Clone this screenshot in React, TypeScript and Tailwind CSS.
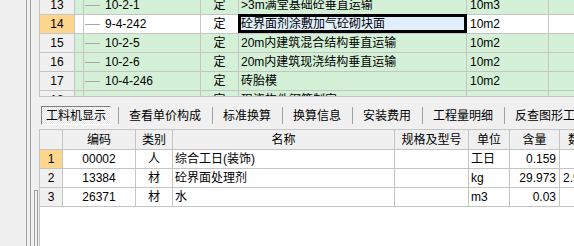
import React from "react";

const FONT = "font-['Liberation_Sans','Noto_Sans_CJK_SC',sans-serif]";

type TopRow = { no: string; code: string; kind: string; name: string; unit: string; selected?: boolean; box?: boolean };

const topRows: TopRow[] = [
  { no: "13", code: "10-2-1", kind: "定", name: ">3m满堂基础砼垂直运输", unit: "10m3" },
  { no: "14", code: "9-4-242", kind: "定", name: "砼界面剂涂敷加气砼砌块面", unit: "10m2", selected: true },
  { no: "15", code: "10-2-5", kind: "定", name: "20m内建筑混合结构垂直运输", unit: "10m2" },
  { no: "16", code: "10-2-6", kind: "定", name: "20m内建筑现浇结构垂直运输", unit: "10m2" },
  { no: "17", code: "10-4-246", kind: "定", name: "砖胎模", unit: "10m2" },
  { no: "18", code: "", kind: "定", name: "现浇构件钢筋制安", unit: "", box: true },
];

const tabs = ["查看单价构成", "标准换算", "换算信息", "安装费用", "工程量明细", "反查图形工程量"];

const items = [
  { no: "1", code: "00002", kind: "人", name: "综合工日(装饰)", unit: "工日", qty: "0.159", total: "", active: true },
  { no: "2", code: "13384", kind: "材", name: "砼界面处理剂", unit: "kg", qty: "29.973", total: "2.997" },
  { no: "3", code: "26371", kind: "材", name: "水", unit: "m3", qty: "0.03", total: "" },
];

function TopGrid() {
  return (
    <div className="h-[97px] overflow-hidden border-b border-l border-[#c4c4c4]">
      <div className="mt-[-4px] flex flex-col">
        {topRows.map((r) => {
          const cell = r.selected ? "bg-white" : "bg-[#d4f1d7]";
          return (
            <div key={r.no} className="flex h-[19px] shrink-0 border-b border-[#c4c4c4]">
              <div
                className={`flex w-[35px] shrink-0 items-center justify-center border-r border-[#c4c4c4] ${
                  r.selected ? "bg-[#ffd68e]" : "bg-[#f0f0f0]"
                }`}
              >
                {r.no}
              </div>
              <div className={`w-[9px] shrink-0 border-r border-[#c4c4c4] ${cell}`} />
              <div className={`flex w-[117px] shrink-0 items-center border-r border-[#c4c4c4] ${cell}`}>
                {r.box ? (
                  <div className="ml-[4px] mt-[12px] h-[12px] w-[12px] self-start border border-[#909090] bg-white" />
                ) : (
                  <>
                    <div className="ml-[1px] h-px w-[15px] bg-[#a8a8a8]" />
                    <span className="ml-[5px]">{r.code}</span>
                  </>
                )}
              </div>
              <div className={`flex w-[38px] shrink-0 items-center justify-center border-r border-[#c4c4c4] ${cell}`}>
                {r.kind}
              </div>
              <div className={`relative flex w-[228px] shrink-0 items-center border-r border-[#c4c4c4] pl-[2px] ${cell}`}>
                {r.selected && (
                  <div className="absolute -left-[1px] -right-[1px] -top-[1px] bottom-0 border-[3px] border-black bg-[#e1effd]" />
                )}
                <span className="relative whitespace-nowrap">{r.name}</span>
              </div>
              <div className={`flex w-[82px] shrink-0 items-center border-r border-[#c4c4c4] pl-[3px] ${cell}`}>
                {r.unit}
              </div>
              <div className={`flex-1 ${cell}`} />
            </div>
          );
        })}
      </div>
    </div>
  );
}

function TabBar() {
  return (
    <div className="flex h-[32px] shrink-0 items-start pl-[2px] pt-[9px]">
      <div className="flex h-[19px] w-[70px] shrink-0 items-center justify-center border border-b-white border-l-[#808080] border-r-white border-t-[#808080] bg-[image:repeating-conic-gradient(#ffffff_0%_25%,#e4e4e4_0%_50%)] bg-size-[2px_2px]">
        工料机显示
      </div>
      <div className="w-[7px] shrink-0" />
      {tabs.map((t) => (
        <div key={t} className="flex h-[19px] shrink-0 items-center">
          <div className="h-[17px] w-px bg-[#a0a0a0]" />
          <span className="whitespace-nowrap pl-[10px] pr-[11px]">{t}</span>
        </div>
      ))}
    </div>
  );
}

function ItemGrid() {
  const b = "border-r border-[#c4c4c4]";
  return (
    <div className="flex flex-1 flex-col overflow-hidden border-l border-t border-[#c4c4c4] bg-white">
      <div className="flex h-[20px] shrink-0 border-b border-[#c4c4c4] bg-[#f0f0f0]">
        <div className={`w-[23px] shrink-0 ${b}`} />
        <div className={`flex w-[73px] shrink-0 items-center justify-center ${b}`}>编码</div>
        <div className={`flex w-[37px] shrink-0 items-center justify-center ${b}`}>类别</div>
        <div className={`flex w-[222px] shrink-0 items-center justify-center ${b}`}>名称</div>
        <div className={`flex w-[74px] shrink-0 items-center justify-center ${b}`}>规格及型号</div>
        <div className={`flex w-[41px] shrink-0 items-center justify-center ${b}`}>单位</div>
        <div className={`flex w-[50px] shrink-0 items-center justify-center ${b}`}>含量</div>
        <div className="flex flex-1 items-center whitespace-nowrap pl-[8px]">数量</div>
      </div>
      {items.map((r) => (
        <div key={r.no} className="flex h-[19px] shrink-0 border-b border-[#c4c4c4]">
          <div
            className={`flex w-[23px] shrink-0 items-center justify-center ${b} ${
              r.active ? "bg-[#ffd68e]" : "bg-[#f0f0f0]"
            }`}
          >
            {r.no}
          </div>
          <div className={`flex w-[73px] shrink-0 items-center justify-center ${b}`}>{r.code}</div>
          <div className={`flex w-[37px] shrink-0 items-center justify-center ${b}`}>{r.kind}</div>
          <div className={`flex w-[222px] shrink-0 items-center pl-[2px] ${b}`}>{r.name}</div>
          <div className={`w-[74px] shrink-0 ${b}`} />
          <div className={`flex w-[41px] shrink-0 items-center pl-[2px] ${b}`}>{r.unit}</div>
          <div className={`flex w-[50px] shrink-0 items-center justify-end pr-[3px] ${b}`}>{r.qty}</div>
          <div className="flex flex-1 items-center whitespace-nowrap pl-[3px]">{r.total}</div>
        </div>
      ))}
    </div>
  );
}

export default function App() {
  return (
    <div className={`flex h-[246px] w-[574px] overflow-hidden bg-[#f0f0f0] text-[12px] leading-[18px] text-black ${FONT}`}>
      <div className="flex h-full w-[39px] shrink-0">
        <div className="w-[26px] shrink-0" />
        <div className="w-[5px] shrink-0 border-x border-[#a0a0a0]" />
        <div className="flex w-[8px] shrink-0 flex-col justify-end pl-[3px]">
          <div className="h-[56px] w-[4px] border-x border-t border-[#a0a0a0]" />
        </div>
      </div>
      <div className="flex min-w-0 flex-1 flex-col">
        <TopGrid />
        <TabBar />
        <ItemGrid />
      </div>
    </div>
  );
}
